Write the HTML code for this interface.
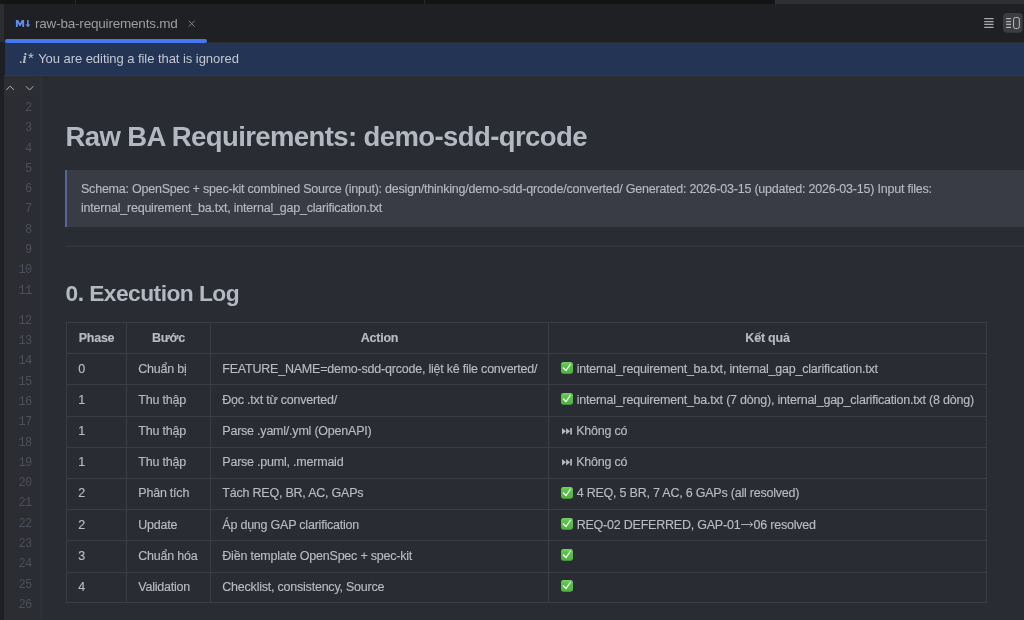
<!DOCTYPE html>
<html><head><meta charset="utf-8">
<style>
*{margin:0;padding:0;box-sizing:border-box}
html,body{width:1024px;height:620px;overflow:hidden;background:#2a2c33;font-family:"Liberation Sans",sans-serif;-webkit-font-smoothing:antialiased}
#wrap{position:absolute;left:0;top:0;width:1024px;height:620px;will-change:transform}
.abs{position:absolute}
#topstrip{left:0;top:0;width:1024px;height:4px;background:#141415}
.tdiv{position:absolute;top:0;width:1.5px;height:4px;background:#28292b}
#topright{left:774.5px;top:0;width:249.5px;height:4px;background:#2e2f33;border-left:1.5px solid #34353a}
#leftstrip{left:0;top:4px;width:4px;height:38px;background:#2b2d30}
#leftstrip2{left:0;top:42px;width:4.5px;height:578px;background:#1e1f22}
#tabbar{left:4px;top:4px;width:1020px;height:39px;background:#1f2023}
#tabbline{left:4px;top:41.5px;width:1020px;height:1px;background:#2c2e33}
#tabtext{left:35px;top:15.5px;font-size:13.5px;letter-spacing:-0.2px;color:#9c9ea2;white-space:nowrap}
#tabclose{left:188.3px;top:19.6px;width:7.4px;height:7.4px}
#underline{left:5px;top:39px;width:202px;height:3.7px;background:#4677ef;border-radius:2px}
#banner{left:4.5px;top:42.7px;width:1019.5px;height:32.3px;background:#233454}
#bannertext{left:19px;top:49.5px;line-height:15px;font-size:13px;color:#c3c7d0;white-space:nowrap}
#bannerline{left:4px;top:75px;width:1020px;height:1px;background:#34373d}
#gutter{left:4px;top:76px;width:38px;height:544px;background:#2b2d33}
#gutline{left:40.5px;top:76px;width:1.5px;height:544px;background:#2f3238}
.ln{position:absolute;right:992.2px;font-family:"Liberation Mono",monospace;font-size:12px;letter-spacing:-0.5px;color:#4b505a;line-height:12px;text-align:right}
#preview{left:42px;top:76px;width:982px;height:544px;background:#2a2c33;overflow:hidden}
h1{position:absolute;left:23.5px;top:44.5px;font-size:27.5px;letter-spacing:-0.6px;font-weight:bold;color:#b4b8c3;white-space:nowrap}
#bq{position:absolute;left:23px;top:94px;width:970px;height:57px;background:#393c44;border-left:2.5px solid #56659a}
#bq p{-webkit-text-stroke:0.15px;position:absolute;left:14px;top:10px;font-size:12.5px;letter-spacing:-0.22px;line-height:18.6px;color:#b6b9c1;white-space:nowrap}
#hr{position:absolute;left:24px;top:169px;width:960px;height:2px;background:#303338}
h2{position:absolute;left:23.5px;top:204px;font-size:22.8px;letter-spacing:-0.55px;font-weight:bold;color:#b4b8c3;white-space:nowrap}
table{-webkit-text-stroke:0.15px;position:absolute;left:24px;top:246px;border-collapse:separate;border-spacing:0;table-layout:fixed;width:921px;font-size:12.5px;letter-spacing:-0.22px;color:#b8bbc3}
td,th{border-left:1px solid #3b3d42;border-top:1px solid #3b3d42;padding:0 0 1.2px 11.3px;height:31.2px;white-space:nowrap;overflow:visible;text-align:left;font-weight:normal;vertical-align:middle}
th{font-weight:bold;text-align:center;padding:0}
td.c4,th.c4{border-right:1px solid #3b3d42}
td.c4{padding-left:12px}
tr.last td{border-bottom:1px solid #3b3d42}
.c1{width:60px}.c2{width:84px}.c3{width:338px}.c4{width:439px}
.em{display:inline-block;vertical-align:-1.5px;margin-right:0.4px}
.sk{display:inline-block;vertical-align:0.3px;margin-left:0.8px;margin-right:0.6px}
</style></head><body><div id="wrap">
<div id="topstrip" class="abs"></div>
<div id="leftstrip" class="abs"></div>
<div id="leftstrip2" class="abs"></div>
<div id="tabbar" class="abs"></div><div id="tabbline" class="abs"></div><div class="tdiv" style="left:74.7px"></div><div class="tdiv" style="left:423.7px"></div><div id="topright" class="abs"></div>
<svg class="abs" style="left:12px;top:16px" width="22" height="14" viewBox="12 16 22 14"><path d="M15.9 27.1V20h2.3l1.8 3.5 1.8-3.5h2.3v7.1h-1.8v-4.2l-1.7 3.1h-1.2l-1.7-3.1v4.2z" fill="#5f8ff2"/><path d="M27.1 20h1.6v4.6h1.7l-2.5 2.6-2.5-2.6h1.7z" fill="#5f8ff2"/></svg>
<div id="tabtext" class="abs">raw-ba-requirements.md</div>
<svg id="tabclose" class="abs" viewBox="0 0 8 8"><path d="M0.8 0.8l6.4 6.4M7.2 0.8l-6.4 6.4" stroke="#8a8c90" stroke-width="1"/></svg>
<div id="underline" class="abs"></div>
<svg class="abs" style="left:980px;top:10px" width="44" height="26" viewBox="980 10 44 26">
<g stroke="#a9aaad" stroke-width="1.2" fill="none"><path d="M984.2 18.7h9.4M984.2 21.6h9.4M984.2 24.4h9.4M984.2 27.3h9.4"/></g>
<rect x="1003.1" y="13.1" width="19.6" height="19.7" rx="4" fill="#3b3d41"/>
<g stroke="#b0b1b4" stroke-width="1.2" fill="none"><path d="M1006.2 18.7h4.8M1006.2 21.6h4.8M1006.2 24.4h4.8M1006.2 27.3h4.8"/></g>
<rect x="1013.6" y="17.5" width="5.7" height="11" rx="1.8" stroke="#bdbec1" stroke-width="1" fill="none"/>
</svg>
<div id="banner" class="abs"></div>
<div id="bannertext" class="abs"><span style="font-family:'Liberation Serif',serif;font-size:14px">.<i style="font-size:15px;font-weight:bold;color:#b4b8c0;margin-right:1.3px">i</i><span style="font-family:'Liberation Sans',sans-serif;font-size:15px;position:relative;top:0.8px">*</span></span><span style="margin-left:1px;letter-spacing:-0.05px"> You are editing a file that is ignored</span></div>
<div id="bannerline" class="abs"></div>
<div id="gutter" class="abs"></div>
<div id="gutline" class="abs"></div>
<div class="abs" style="left:4.5px;top:76px;width:34.5px;height:20px;background:#2c2e34;border-top-right-radius:4px"></div><svg class="abs" style="left:0;top:80px" width="40" height="14" viewBox="0 80 40 14"><path d="M6.3 90l3.9-3.9 3.9 3.9M25.8 86.2l3.8 3.8 3.8-3.8" stroke="#aeb1b6" stroke-width="1" fill="none"/></svg>
<div id="lines"><div class="ln" style="top:101.8px">2</div><div class="ln" style="top:122.1px">3</div><div class="ln" style="top:142.5px">4</div><div class="ln" style="top:162.8px">5</div><div class="ln" style="top:183.1px">6</div><div class="ln" style="top:203.4px">7</div><div class="ln" style="top:223.8px">8</div><div class="ln" style="top:244.1px">9</div><div class="ln" style="top:264.4px">10</div><div class="ln" style="top:284.8px">11</div><div class="ln" style="top:314.7px">12</div><div class="ln" style="top:335.0px">13</div><div class="ln" style="top:355.3px">14</div><div class="ln" style="top:375.6px">15</div><div class="ln" style="top:395.9px">16</div><div class="ln" style="top:416.2px">17</div><div class="ln" style="top:436.5px">18</div><div class="ln" style="top:456.8px">19</div><div class="ln" style="top:477.1px">20</div><div class="ln" style="top:497.4px">21</div><div class="ln" style="top:517.7px">22</div><div class="ln" style="top:538.0px">23</div><div class="ln" style="top:558.3px">24</div><div class="ln" style="top:578.6px">25</div><div class="ln" style="top:598.9px">26</div></div>
<div id="preview" class="abs">
<h1>Raw BA Requirements: demo-sdd-qrcode</h1>
<div id="bq"><p>Schema: OpenSpec + spec-kit combined Source (input): design/thinking/demo-sdd-qrcode/converted/ Generated: 2026-03-15 (updated: 2026-03-15) Input files:<br>internal_requirement_ba.txt, internal_gap_clarification.txt</p></div>
<div id="hr"></div>
<h2>0. Execution Log</h2>
<table>
<tr class="hd"><th class="c1">Phase</th><th class="c2">Bước</th><th class="c3">Action</th><th class="c4">Kết quả</th></tr>
<tr><td class="c1">0</td><td class="c2">Chuẩn bị</td><td class="c3">FEATURE_NAME=demo-sdd-qrcode, liệt kê file converted/</td><td class="c4"><svg class="em" width="12" height="12" viewBox="0 0 12 12"><defs><linearGradient id="g1" x1="0" y1="0" x2="0" y2="1"><stop offset="0" stop-color="#7ad36a"/><stop offset="0.25" stop-color="#5cc24c"/><stop offset="1" stop-color="#4fb43f"/></linearGradient></defs><rect x="0" y="0" width="12" height="11.7" rx="2.6" fill="url(#g1)"/><path d="M2.4 6L5.1 8.5 9.2 2.5" stroke="#fff" stroke-width="1.3" fill="none" stroke-linecap="round" stroke-linejoin="round"/></svg> internal_requirement_ba.txt, internal_gap_clarification.txt</td></tr>
<tr><td class="c1">1</td><td class="c2">Thu thập</td><td class="c3">Đọc .txt từ converted/</td><td class="c4"><svg class="em" width="12" height="12" viewBox="0 0 12 12"><defs><linearGradient id="g2" x1="0" y1="0" x2="0" y2="1"><stop offset="0" stop-color="#7ad36a"/><stop offset="0.25" stop-color="#5cc24c"/><stop offset="1" stop-color="#4fb43f"/></linearGradient></defs><rect x="0" y="0" width="12" height="11.7" rx="2.6" fill="url(#g2)"/><path d="M2.4 6L5.1 8.5 9.2 2.5" stroke="#fff" stroke-width="1.3" fill="none" stroke-linecap="round" stroke-linejoin="round"/></svg> internal_requirement_ba.txt (7 dòng), internal_gap_clarification.txt (8 dòng)</td></tr>
<tr><td class="c1">1</td><td class="c2">Thu thập</td><td class="c3">Parse .yaml/.yml (OpenAPI)</td><td class="c4"><svg class="sk" width="10.5" height="6.5" viewBox="0 0 11 7" preserveAspectRatio="none"><path d="M0 0L4.2 3.5 0 7zM4.3 0L8.5 3.5 4.3 7z" fill="#b4b8c0"/><rect x="8.6" y="0" width="1.8" height="7" fill="#b4b8c0"/></svg> Không có</td></tr>
<tr><td class="c1">1</td><td class="c2">Thu thập</td><td class="c3">Parse .puml, .mermaid</td><td class="c4"><svg class="sk" width="10.5" height="6.5" viewBox="0 0 11 7" preserveAspectRatio="none"><path d="M0 0L4.2 3.5 0 7zM4.3 0L8.5 3.5 4.3 7z" fill="#b4b8c0"/><rect x="8.6" y="0" width="1.8" height="7" fill="#b4b8c0"/></svg> Không có</td></tr>
<tr><td class="c1">2</td><td class="c2">Phân tích</td><td class="c3">Tách REQ, BR, AC, GAPs</td><td class="c4"><svg class="em" width="12" height="12" viewBox="0 0 12 12"><defs><linearGradient id="g3" x1="0" y1="0" x2="0" y2="1"><stop offset="0" stop-color="#7ad36a"/><stop offset="0.25" stop-color="#5cc24c"/><stop offset="1" stop-color="#4fb43f"/></linearGradient></defs><rect x="0" y="0" width="12" height="11.7" rx="2.6" fill="url(#g3)"/><path d="M2.4 6L5.1 8.5 9.2 2.5" stroke="#fff" stroke-width="1.3" fill="none" stroke-linecap="round" stroke-linejoin="round"/></svg> 4 REQ, 5 BR, 7 AC, 6 GAPs (all resolved)</td></tr>
<tr><td class="c1">2</td><td class="c2">Update</td><td class="c3">Áp dụng GAP clarification</td><td class="c4"><svg class="em" width="12" height="12" viewBox="0 0 12 12"><defs><linearGradient id="g4" x1="0" y1="0" x2="0" y2="1"><stop offset="0" stop-color="#7ad36a"/><stop offset="0.25" stop-color="#5cc24c"/><stop offset="1" stop-color="#4fb43f"/></linearGradient></defs><rect x="0" y="0" width="12" height="11.7" rx="2.6" fill="url(#g4)"/><path d="M2.4 6L5.1 8.5 9.2 2.5" stroke="#fff" stroke-width="1.3" fill="none" stroke-linecap="round" stroke-linejoin="round"/></svg> REQ-02 DEFERRED, GAP-01<svg width="12.5" height="7" viewBox="0 0 12.5 7" style="display:inline-block;vertical-align:0.6px;margin:0 0.3px"><path d="M0 3.5h11.5M8.8 1l2.9 2.5-2.9 2.5" stroke="#b8bbc3" stroke-width="0.9" fill="none"/></svg>06 resolved</td></tr>
<tr><td class="c1">3</td><td class="c2">Chuẩn hóa</td><td class="c3">Điền template OpenSpec + spec-kit</td><td class="c4"><svg class="em" width="12" height="12" viewBox="0 0 12 12"><defs><linearGradient id="g5" x1="0" y1="0" x2="0" y2="1"><stop offset="0" stop-color="#7ad36a"/><stop offset="0.25" stop-color="#5cc24c"/><stop offset="1" stop-color="#4fb43f"/></linearGradient></defs><rect x="0" y="0" width="12" height="11.7" rx="2.6" fill="url(#g5)"/><path d="M2.4 6L5.1 8.5 9.2 2.5" stroke="#fff" stroke-width="1.3" fill="none" stroke-linecap="round" stroke-linejoin="round"/></svg></td></tr>
<tr class="last"><td class="c1">4</td><td class="c2">Validation</td><td class="c3">Checklist, consistency, Source</td><td class="c4"><svg class="em" width="12" height="12" viewBox="0 0 12 12"><defs><linearGradient id="g6" x1="0" y1="0" x2="0" y2="1"><stop offset="0" stop-color="#7ad36a"/><stop offset="0.25" stop-color="#5cc24c"/><stop offset="1" stop-color="#4fb43f"/></linearGradient></defs><rect x="0" y="0" width="12" height="11.7" rx="2.6" fill="url(#g6)"/><path d="M2.4 6L5.1 8.5 9.2 2.5" stroke="#fff" stroke-width="1.3" fill="none" stroke-linecap="round" stroke-linejoin="round"/></svg></td></tr>
</table>
</div>
</div></body></html>
